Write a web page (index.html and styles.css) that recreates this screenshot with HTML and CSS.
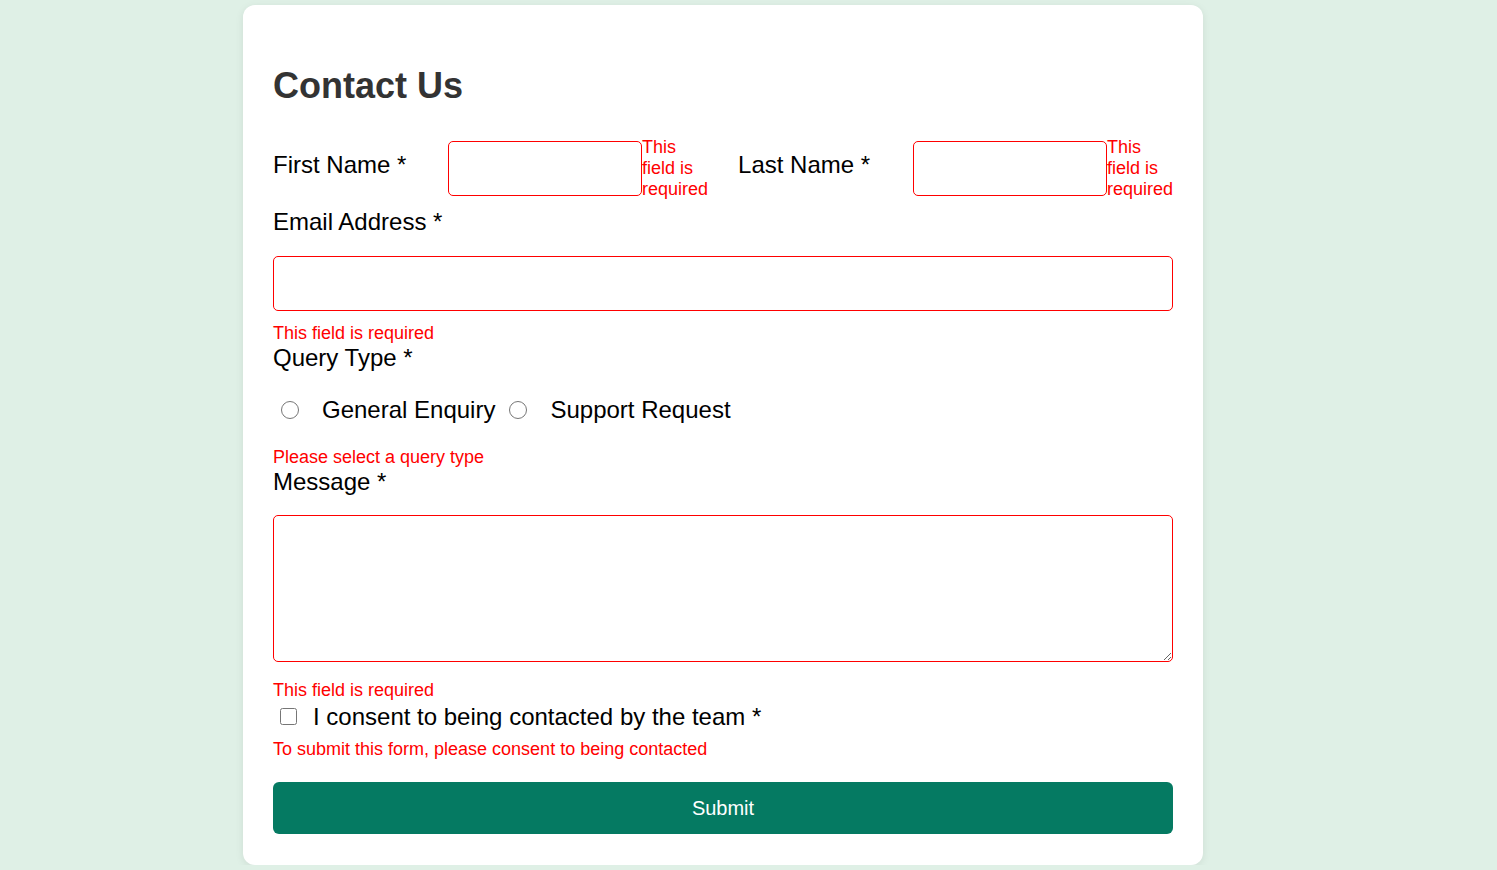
FILE: index.html
```html
<!DOCTYPE html>
<html lang="en">
<head>
<meta charset="utf-8">
<title>Contact Us</title>
<link rel="stylesheet" href="styles.css">
</head>
<body>
<form class="card" novalidate>
  <h1 class="title">Contact Us</h1>
  <div class="name-row">
    <div class="name-group">
      <label class="label name-label" for="first">First Name *</label>
      <input class="text-input name-input" id="first" type="text">
      <span class="error name-error">This field is required</span>
    </div>
    <div class="name-group">
      <label class="label name-label" for="last">Last Name *</label>
      <input class="text-input name-input" id="last" type="text">
      <span class="error name-error">This field is required</span>
    </div>
  </div>

  <label class="label email-label" for="email">Email Address *</label>
  <input class="text-input email-input" id="email" type="email">
  <span class="error field-error">This field is required</span>

  <span class="label">Query Type *</span>
  <div class="radio-row">
    <label class="radio-option"><input class="radio" type="radio" name="query">General Enquiry</label>
    <label class="radio-option"><input class="radio" type="radio" name="query">Support Request</label>
  </div>
  <span class="error query-error">Please select a query type</span>

  <label class="label" for="message">Message *</label>
  <textarea class="message-input" id="message"></textarea>
  <span class="error message-error">This field is required</span>

  <label class="consent-row"><input class="checkbox" type="checkbox">I consent to being contacted by the team *</label>
  <span class="error consent-error">To submit this form, please consent to being contacted</span>

  <button class="submit" type="button">Submit</button>
</form>
</body>
</html>
```

FILE: styles.css
```css
body {
  margin: 0;
  background: #dff0e6;
  font-family: "Liberation Sans", Arial, sans-serif;
}

.card {
  display: block;
  width: 900px;
  margin: 5px 0 0 243px;
  padding: 30px 30px 31px;
  background: #ffffff;
  border-radius: 12px;
  box-shadow: 0 2px 8px rgba(0, 0, 0, 0.08);
}

.title {
  font-size: 36px;
  line-height: 41px;
  font-weight: 700;
  color: #333333;
  margin: 30px 0 32px;
}

.name-row {
  display: flex;
  gap: 30px;
}

.name-group {
  flex: 1;
  display: flex;
  align-items: flex-start;
}

.label {
  display: block;
  font-size: 24px;
  line-height: 27px;
  color: #000000;
}

.name-label {
  width: 175px;
  flex-shrink: 0;
  margin-top: 13px;
}

.text-input {
  box-sizing: border-box;
  height: 55px;
  margin: 0;
  padding: 0 10px;
  border: 1px solid #ff0000;
  border-radius: 5px;
  font: inherit;
  font-size: 18px;
  background: #ffffff;
  outline: none;
}

.name-input {
  width: 194px;
  flex-shrink: 0;
  margin-top: 3px;
}

.error {
  display: block;
  font-size: 18px;
  line-height: 21px;
  color: #ff0000;
}

.name-error {
  flex: 1;
  min-width: 0;
  margin-top: -1px;
}

.email-label {
  margin-top: 8px;
}

.email-input {
  display: block;
  width: 100%;
  margin-top: 21px;
}

.field-error {
  margin-top: 12px;
}

.radio-row {
  display: flex;
  align-items: center;
  height: 27px;
  margin-top: 25px;
}

.radio-option {
  display: flex;
  align-items: center;
  margin-right: 6px;
  font-size: 24px;
  line-height: 27px;
  color: #000000;
}

.radio {
  width: 18px;
  height: 18px;
  margin: 0 23px 0 8px;
}

.query-error {
  margin-top: 24px;
}

.message-input {
  display: block;
  box-sizing: border-box;
  width: 100%;
  height: 147px;
  margin: 20px 0 0;
  border: 1px solid #ff0000;
  border-radius: 5px;
  font: inherit;
  outline: none;
}

.message-error {
  margin-top: 18px;
}

.consent-row {
  display: flex;
  align-items: center;
  margin-top: 2px;
  font-size: 24px;
  line-height: 27px;
  color: #000000;
}

.checkbox {
  width: 17px;
  height: 17px;
  margin: 0 16px 0 7px;
}

.consent-error {
  margin-top: 9px;
}

.submit {
  display: block;
  width: 100%;
  height: 52px;
  margin-top: 22px;
  border: 0;
  border-radius: 6px;
  background: #057a62;
  color: #ffffff;
  font-family: inherit;
  font-size: 20px;
  cursor: pointer;
}
```
